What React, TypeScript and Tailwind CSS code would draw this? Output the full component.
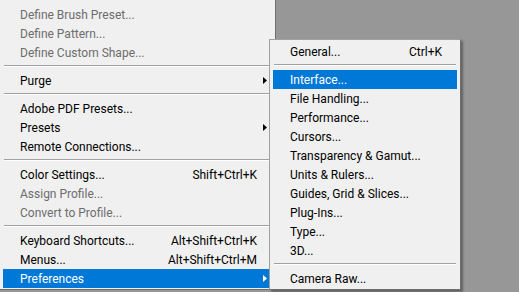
type Item =
  | { sep: true }
  | {
      label: string;
      shortcut?: string;
      disabled?: boolean;
      sub?: boolean;
      active?: boolean;
    };

const mainItems: Item[] = [
  { label: "Define Brush Preset...", disabled: true },
  { label: "Define Pattern...", disabled: true },
  { label: "Define Custom Shape...", disabled: true },
  { sep: true },
  { label: "Purge", sub: true },
  { sep: true },
  { label: "Adobe PDF Presets..." },
  { label: "Presets", sub: true },
  { label: "Remote Connections..." },
  { sep: true },
  { label: "Color Settings...", shortcut: "Shift+Ctrl+K" },
  { label: "Assign Profile...", disabled: true },
  { label: "Convert to Profile...", disabled: true },
  { sep: true },
  { label: "Keyboard Shortcuts...", shortcut: "Alt+Shift+Ctrl+K" },
  { label: "Menus...", shortcut: "Alt+Shift+Ctrl+M" },
  { label: "Preferences", sub: true, active: true },
];

const prefItems: Item[] = [
  { label: "General...", shortcut: "Ctrl+K" },
  { sep: true },
  { label: "Interface...", active: true },
  { label: "File Handling..." },
  { label: "Performance..." },
  { label: "Cursors..." },
  { label: "Transparency & Gamut..." },
  { label: "Units & Rulers..." },
  { label: "Guides, Grid & Slices..." },
  { label: "Plug-Ins..." },
  { label: "Type..." },
  { label: "3D..." },
  { sep: true },
  { label: "Camera Raw..." },
];

const Arrow = ({ white }: { white?: boolean }) => (
  <svg
    width="4"
    height="7"
    viewBox="0 0 4 7"
    className="absolute right-[5px] top-[6px]"
  >
    <path d="M0 0 L4 3.5 L0 7 Z" fill={white ? "#ffffff" : "#000000"} />
  </svg>
);

const MenuRows = ({ items }: { items: Item[] }) => (
  <>
    {items.map((item, i) =>
      "sep" in item ? (
        <div key={i} className="h-[9px] pt-[3px] px-[1px]">
          <div className="border-t border-b border-t-[#a0a0a0] border-b-white" />
        </div>
      ) : (
        <div
          key={i}
          className={`relative flex h-[19px] items-center justify-between pl-[17px] pr-[15px] ${
            item.active
              ? "bg-[#0078d7] text-white"
              : item.disabled
              ? "text-[#6d6d6d]"
              : "text-black"
          }`}
        >
          <span className="pt-[1px]">{item.label}</span>
          {item.shortcut && <span className="pt-[1px]">{item.shortcut}</span>}
          {item.sub && <Arrow white={item.active} />}
        </div>
      )
    )}
  </>
);

export default function App() {
  return (
    <div
      className="relative h-[292px] w-[519px] overflow-hidden bg-[#979797] text-[12px] leading-none"
      style={{ fontFamily: 'Roboto, "Noto Sans", sans-serif' }}
    >
      {/* main edit menu */}
      <div className="w-[276px] border-r border-b border-[#6e6e6e] bg-[#f0f0f0] pt-[5px] pb-[1px] pl-[3px] pr-[3px]">
        <MenuRows items={mainItems} />
      </div>

      {/* preferences submenu */}
      <div className="absolute left-[269px] top-[39px] w-[192px] border border-[#a0a0a0] border-r-[#6e6e6e] border-b-[#6e6e6e] bg-[#f0f0f0] px-[3px] pt-[2px] pb-[1px] shadow-[2px_2px_2px_rgba(0,0,0,0.35)]">
        <MenuRows items={prefItems} />
      </div>
    </div>
  );
}
